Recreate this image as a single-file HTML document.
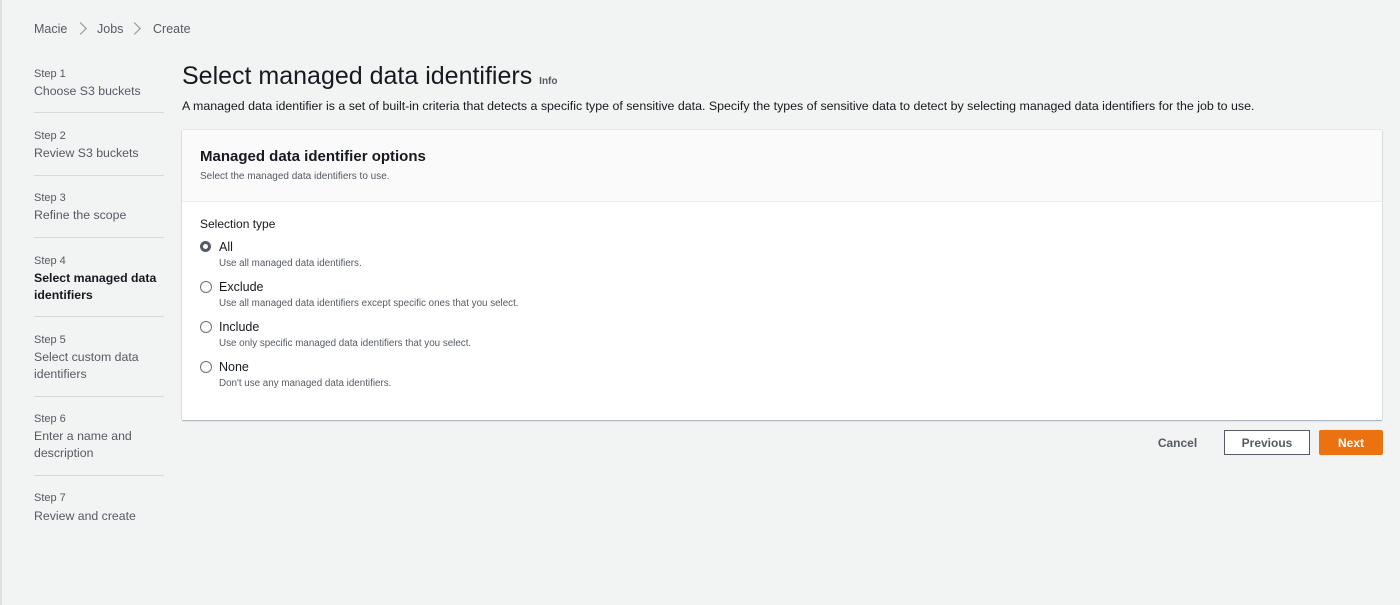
<!DOCTYPE html>
<html><head><style>
body{margin:0;width:1400px;height:605px;background:#f2f3f3;font-family:"Liberation Sans",sans-serif;color:#16191f;position:relative;overflow:hidden}
.lb{position:absolute;left:0;top:0;width:2px;height:605px;background:#e0e0e0}
.a{position:absolute;white-space:nowrap}
.bc{top:22px;font-size:12.5px;color:#545b64}
.ch{position:absolute;top:24px;width:8px;height:8px;border-top:1px solid #879596;border-right:1px solid #879596;transform:rotate(45deg)}
.st{left:34px;font-size:11px;color:#545b64}
.sn{left:34px;font-size:12.3px;color:#545b64;line-height:17px}
.hr{position:absolute;left:34px;width:130px;border-top:1px solid #d5dbdb}
.panel{position:absolute;left:182px;top:130px;width:1200px;height:290px;background:#fff;box-shadow:0 1px 1px rgba(0,31,63,.3),0 0 1px rgba(0,31,63,.25)}
.ph{height:71px;background:#fafafa;border-bottom:1px solid #eaeded}
.r{position:absolute;left:200px;width:10px;height:10px;border:1px solid #687078;border-radius:50%}
.lab{left:219px;font-size:12.5px}
.d{left:219px;font-size:9.8px;color:#545b64}
.btn{position:absolute;top:430px;height:25px;font-size:12px;font-weight:bold;display:flex;align-items:center;justify-content:center;box-sizing:border-box}
</style></head><body>
<div class="lb"></div>
<div class="a bc" style="left:34px">Macie</div>
<div class="ch" style="left:76px"></div>
<div class="a bc" style="left:97px">Jobs</div>
<div class="ch" style="left:130px"></div>
<div class="a bc" style="left:153px">Create</div>

<div class="a st" style="top:68px">Step 1</div><div class="a sn" style="top:83px">Choose S3 buckets</div><div class="hr" style="top:112px"></div>
<div class="a st" style="top:130px">Step 2</div><div class="a sn" style="top:145px">Review S3 buckets</div><div class="hr" style="top:175px"></div>
<div class="a st" style="top:192px">Step 3</div><div class="a sn" style="top:207px">Refine the scope</div><div class="hr" style="top:237px"></div>
<div class="a st" style="top:255px">Step 4</div><div class="a sn" style="top:270px;color:#16191f;font-weight:bold">Select managed data<br>identifiers</div><div class="hr" style="top:316px"></div>
<div class="a st" style="top:334px">Step 5</div><div class="a sn" style="top:349px">Select custom data<br>identifiers</div><div class="hr" style="top:396px"></div>
<div class="a st" style="top:413px">Step 6</div><div class="a sn" style="top:428px">Enter a name and<br>description</div><div class="hr" style="top:475px"></div>
<div class="a st" style="top:492px">Step 7</div><div class="a sn" style="top:508px">Review and create</div>

<div class="a" style="left:182px;top:62px;font-size:25px">Select managed data identifiers <span style="font-size:10px;font-weight:bold;color:#545b64">Info</span></div>
<div class="a" style="left:182px;top:99px;font-size:12.4px">A managed data identifier is a set of built-in criteria that detects a specific type of sensitive data. Specify the types of sensitive data to detect by selecting managed data identifiers for the job to use.</div>

<div class="panel"><div class="ph"></div></div>
<div class="a" style="left:200px;top:148px;font-size:15px;font-weight:bold">Managed data identifier options</div>
<div class="a" style="left:200px;top:171px;font-size:10px;color:#545b64">Select the managed data identifiers to use.</div>
<div class="a" style="left:200px;top:217px;font-size:12px">Selection type</div>

<div class="r" style="top:241px;border:3.5px solid #545b64;width:5px;height:5px"></div>
<div class="a lab" style="top:240px">All</div><div class="a d" style="top:258px">Use all managed data identifiers.</div>
<div class="r" style="top:281px"></div>
<div class="a lab" style="top:280px">Exclude</div><div class="a d" style="top:298px">Use all managed data identifiers except specific ones that you select.</div>
<div class="r" style="top:321px"></div>
<div class="a lab" style="top:320px">Include</div><div class="a d" style="top:338px">Use only specific managed data identifiers that you select.</div>
<div class="r" style="top:361px"></div>
<div class="a lab" style="top:360px">None</div><div class="a d" style="top:378px">Don't use any managed data identifiers.</div>

<div class="btn" style="left:1150px;width:55px;color:#545b64">Cancel</div>
<div class="btn" style="left:1224px;width:86px;border:1px solid #545b64;background:#fff;color:#545b64">Previous</div>
<div class="btn" style="left:1319px;width:64px;background:#ec7211;color:#fff;border-radius:2px">Next</div>
</body></html>
